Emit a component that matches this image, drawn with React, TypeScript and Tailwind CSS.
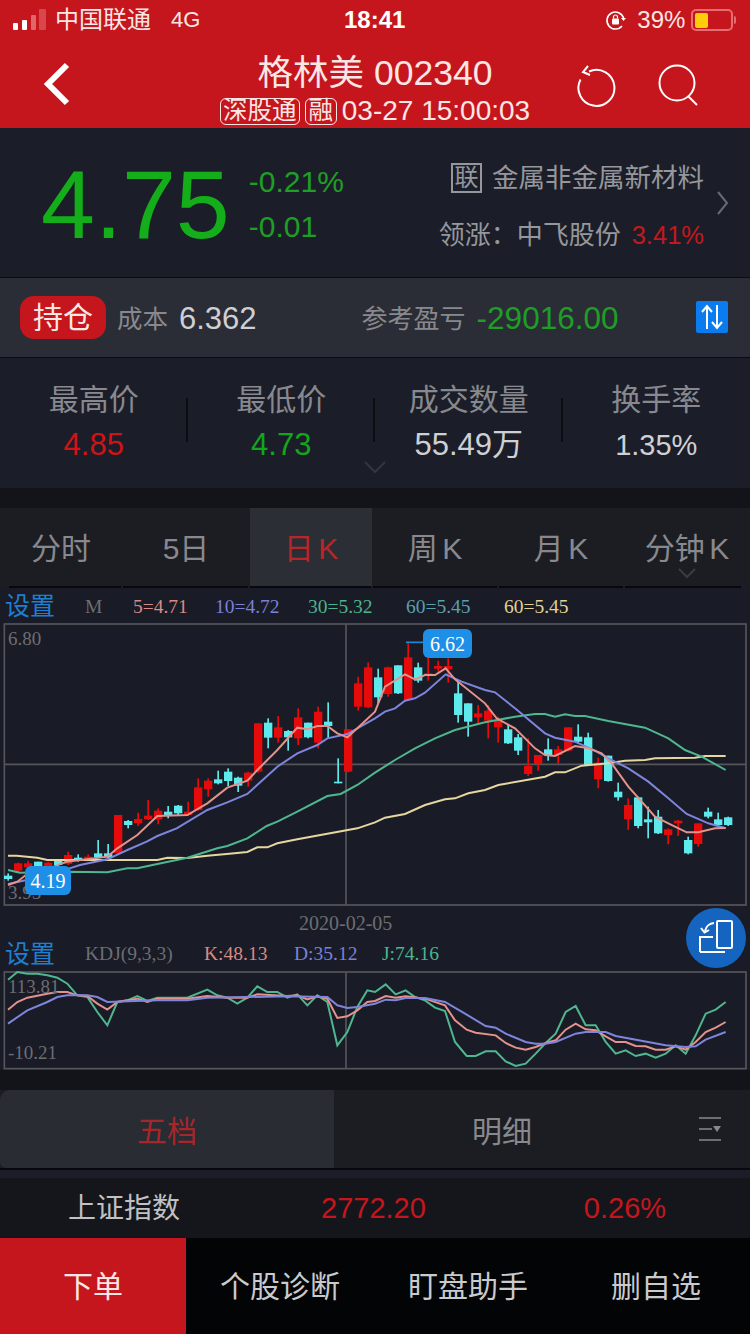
const SANS = "font-['Liberation_Sans','Noto_Sans_CJK_SC',sans-serif]";

// candles: [wick top, body top, body bottom, wick bottom, up?] in 3x picture units
const candles: [number, number, number, number, boolean][] = [
  [850, 857, 867, 872, false], [818, 820, 842, 845, true], [812, 820, 832, 838, true], [815, 815, 828, 830, false],
  [816, 818, 828, 830, true], [810, 812, 825, 827, false], [785, 795, 822, 825, true], [793, 803, 812, 815, false],
  [793, 800, 808, 810, true], [750, 790, 802, 805, false], [762, 790, 802, 805, false], [675, 675, 790, 792, true],
  [690, 693, 705, 715, false], [668, 687, 700, 708, true], [630, 677, 688, 690, true], [655, 662, 688, 703, true],
  [648, 665, 678, 685, false], [645, 647, 670, 678, false], [635, 665, 675, 678, true], [565, 592, 660, 662, true],
  [565, 572, 598, 620, true], [542, 568, 580, 583, false], [535, 545, 573, 588, false], [560, 563, 587, 606, false],
  [545, 548, 572, 590, true], [400, 400, 545, 548, true], [385, 398, 443, 475, false], [378, 412, 443, 458, true],
  [420, 423, 442, 482, false], [355, 382, 445, 465, true], [398, 398, 442, 445, false], [350, 365, 458, 475, true],
  [337, 395, 408, 445, false], [505, 575, 580, 580, false], [418, 418, 545, 547, true], [260, 280, 350, 362, true],
  [217, 232, 352, 354, true], [236, 262, 322, 340, false], [230, 232, 312, 320, true], [226, 226, 310, 312, false],
  [155, 202, 330, 332, true], [218, 232, 272, 278, false], [200, 250, 255, 272, true], [212, 228, 236, 245, true],
  [205, 228, 238, 278, true], [272, 310, 375, 398, false], [340, 340, 395, 440, false], [345, 370, 382, 400, true],
  [345, 362, 392, 445, true], [380, 392, 412, 458, true], [405, 418, 460, 462, false], [432, 442, 482, 495, false],
  [445, 528, 552, 558, true], [495, 495, 522, 542, true], [445, 478, 495, 512, false], [468, 478, 495, 522, true],
  [412, 412, 482, 484, true], [403, 440, 455, 460, false], [428, 442, 525, 527, false], [503, 518, 568, 595, true],
  [497, 497, 573, 575, false], [578, 605, 622, 632, false], [625, 645, 688, 720, true], [620, 622, 708, 715, false],
  [650, 688, 697, 745, false], [660, 680, 730, 732, false], [715, 718, 735, 763, true], [690, 692, 700, 738, true],
  [740, 750, 790, 793, false], [700, 700, 762, 770, true], [653, 665, 680, 685, false], [668, 688, 705, 710, false],
  [680, 682, 705, 708, false],
];

const ma5 = "24,885 52,875 80,853 140,838 200,815 322,800 352,775 412,735 472,678 562,675 622,640 682,593 742,572 772,540 832,480 892,413 922,418 952,408 982,408 1012,430 1042,442 1072,415 1125,365 1155,290 1215,253 1245,268 1275,255 1305,255 1337,235 1365,268 1455,340 1490,385 1545,415 1605,475 1635,495 1665,498 1725,468 1765,475 1805,490 1835,520 1885,590 1925,635 1965,680 2005,700 2060,727 2095,727 2145,715 2177,714";
const ma10 = "24,882 80,870 140,845 200,838 240,825 322,808 382,780 440,755 472,738 530,715 622,660 680,638 742,612 832,530 892,490 952,465 982,445 1042,432 1125,385 1155,365 1185,355 1215,332 1245,325 1275,308 1337,253 1385,275 1455,300 1485,307 1545,355 1635,430 1665,443 1725,455 1785,482 1825,505 1885,535 1945,575 2005,625 2060,672 2125,700 2177,715";
const ma30 = "24,840 60,848 200,845 322,847 382,835 412,835 472,822 562,803 652,775 682,768 742,745 800,708 832,695 892,665 982,618 1022,612 1072,585 1125,548 1185,510 1245,475 1305,445 1365,420 1455,397 1545,380 1605,372 1635,372 1665,380 1695,373 1725,378 1755,378 1825,393 1935,413 2005,445 2055,480 2105,500 2177,540";
const ma60 = "24,797 50,797 112,803 142,810 472,810 502,803 562,804 622,797 680,792 742,786 772,772 802,772 832,760 892,748 1072,715 1125,697 1155,683 1215,672 1275,645 1335,628 1365,625 1405,610 1455,600 1495,585 1635,560 1665,547 1695,547 1745,527 1825,520 1875,512 1935,510 1965,505 2085,503 2115,498 2177,498";

const kdjJ = "24,218 52,195 82,200 112,200 142,205 172,212 202,230 232,265 262,270 292,315 322,355 352,285 382,280 412,267 442,282 472,272 562,272 622,248 652,265 682,272 712,290 742,272 772,238 802,255 832,255 862,272 892,262 922,295 952,265 982,285 1012,415 1042,375 1072,300 1102,250 1125,255 1157,232 1187,262 1217,250 1245,270 1275,280 1305,302 1335,312 1365,405 1400,447 1427,447 1457,433 1487,433 1517,463 1547,477 1577,470 1607,440 1637,408 1667,380 1697,315 1727,297 1757,355 1787,355 1817,405 1847,440 1877,430 1907,447 1937,440 1967,452 1997,440 2027,415 2057,440 2087,385 2117,320 2147,308 2177,285";
const kdjK = "24,308 52,285 82,272 142,260 172,255 202,255 232,265 262,267 292,290 322,308 352,285 412,275 442,285 472,275 562,275 622,267 682,272 742,272 772,262 862,267 892,265 922,277 952,268 982,275 1012,333 1042,328 1072,310 1102,285 1125,282 1157,267 1187,272 1217,268 1275,275 1335,295 1365,340 1400,368 1427,377 1487,385 1517,408 1547,422 1577,428 1607,420 1637,408 1667,400 1697,368 1727,350 1757,367 1787,370 1817,388 1847,405 1877,405 1907,417 1937,418 1967,428 1997,428 2027,418 2057,428 2087,405 2117,375 2147,362 2177,345";
const kdjD = "24,350 82,310 142,285 172,270 202,265 262,265 292,270 322,285 472,280 562,280 622,272 862,268 982,270 1012,295 1042,303 1072,300 1125,290 1157,278 1187,280 1217,273 1275,273 1335,285 1395,320 1457,357 1487,362 1517,380 1577,405 1607,410 1637,410 1667,405 1727,380 1757,375 1817,375 1847,387 1997,415 2057,420 2087,418 2117,398 2177,375";

const PriceChart = () => (
  <svg width="750" height="285" viewBox="0 96 2250 855" className="block">
    <rect x="13" y="102" width="2225" height="843" fill="none" stroke="#55565b" strokeWidth="5" />
    <line x1="1038" y1="102" x2="1038" y2="945" stroke="#55565b" strokeWidth="5" />
    <line x1="13" y1="523" x2="2238" y2="523" stroke="#55565b" strokeWidth="5" />
    {candles.map((c, i) => {
      const x = 24 + i * 30;
      const color = c[4] ? "#e60b0b" : "#5ee9ec";
      return (
        <g key={i} fill={color}>
          <rect x={x - 2} y={c[0]} width="5" height={c[3] - c[0]} />
          <rect x={x - 12} y={c[1]} width="25" height={Math.max(c[2] - c[1], 5)} />
        </g>
      );
    })}
    <polyline points={ma60} fill="none" stroke="#e6d7a0" strokeWidth="6" />
    <polyline points={ma30} fill="none" stroke="#4fb78f" strokeWidth="6" />
    <polyline points={ma10} fill="none" stroke="#7f85dc" strokeWidth="6" />
    <polyline points={ma5} fill="none" stroke="#e3928c" strokeWidth="6" />
    <line x1="1218" y1="157" x2="1270" y2="157" stroke="#1e88d8" strokeWidth="5" />
  </svg>
);

const KdjChart = () => (
  <svg width="750" height="102" viewBox="0 186 2250 306" className="block">
    <rect x="13" y="195" width="2225" height="290" fill="none" stroke="#55565b" strokeWidth="5" />
    <line x1="1038" y1="195" x2="1038" y2="485" stroke="#55565b" strokeWidth="5" />
    <polyline points={kdjJ} fill="none" stroke="#4fb78f" strokeWidth="6" />
    <polyline points={kdjK} fill="none" stroke="#e3928c" strokeWidth="6" />
    <polyline points={kdjD} fill="none" stroke="#7f85dc" strokeWidth="6" />
  </svg>
);

const Stat = ({ label, value, color, last }: { label: string; value: string; color: string; last?: boolean }) => (
  <div className="relative flex h-full w-[187.5px] flex-col items-center pt-[21px]">
    <span className="text-[30px] leading-[42px] text-[#88898e]">{label}</span>
    <span className={`mt-[3px] leading-[42px] ${color}`}>{value}</span>
    {!last && <div className="absolute right-0 top-[40px] h-[44px] w-[2px] bg-[#0c0d11]" />}
  </div>
);

const tabs = [
  { name: "分时", width: "w-[122px]" },
  { name: "5日", width: "w-[128px]" },
  { name: "日 K", width: "w-[122px]" },
  { name: "周 K", width: "w-[126px]" },
  { name: "月 K", width: "w-[126px]" },
  { name: "分钟 K", width: "w-[126px]" },
];

export default function App() {
  return (
    <div className={`relative h-[1334px] w-[750px] overflow-hidden bg-[#12141a] ${SANS}`}>
      {/* status bar */}
      <div className="relative flex h-[40px] items-center bg-[#c4161c] text-white">
        <svg width="36" height="24" viewBox="0 0 36 24" className="ml-[12px]">
          <rect x="1" y="15" width="5" height="7" rx="1" fill="#fff" />
          <rect x="10" y="12" width="5" height="10" rx="1" fill="#fff" />
          <rect x="19" y="7" width="5" height="15" rx="1" fill="#e06669" />
          <rect x="27" y="1" width="7" height="21" rx="1" fill="#d9474b" />
        </svg>
        <span className="ml-[7px] text-[24px] leading-none text-[#fbe6e6]">中国联通</span>
        <span className="ml-[20px] text-[22px] leading-none text-[#fbe6e6]">4G</span>
        <span className="absolute left-[344px] text-[24px] font-bold leading-none">18:41</span>
        <svg width="22" height="22" viewBox="0 0 22 22" className="ml-[405px]">
          <path d="M17 17a8.500 8.500 0 1 1 1.600-8" fill="none" stroke="#fff" strokeWidth="1.600" />
          <path d="M16 9h5l-2.500 3z" fill="#fff" />
          <rect x="7" y="9.500" width="7" height="6" rx="1" fill="#fff" />
          <path d="M8.500 9.500V8a2 2 0 0 1 4 0v1.500" fill="none" stroke="#fff" strokeWidth="1.200" />
        </svg>
        <span className="ml-[10px] text-[24px] leading-none text-[#fbe6e6]">39%</span>
        <div className="ml-[6px] flex h-[22px] w-[42px] items-center rounded-[5px] border-2 border-[#e56c70] pl-[2px]">
          <div className="h-[15px] w-[13px] rounded-[2px] bg-[#ffcc0a]" />
        </div>
        <div className="ml-px h-[8px] w-[2px] rounded-r bg-[#e56c70]" />
      </div>

      {/* title bar */}
      <div className="relative flex h-[88px] flex-col items-center bg-[#c4161c] text-[#fbe6e6]">
        <svg width="30" height="44" viewBox="0 0 30 44" className="absolute left-[42px] top-[22px]">
          <path d="M25 3 6 22l19 19" fill="none" stroke="#fff" strokeWidth="6" />
        </svg>
        <span className="mt-[12px] text-[35.500px] leading-[42px]">格林美 002340</span>
        <div className="mt-[2px] flex h-[30px] items-center">
          <span className="flex h-[27px] w-[80px] items-center justify-center rounded-[6px] border-[1.500px] border-[#fbe6e6] text-[24.500px] leading-none">深股通</span>
          <span className="ml-[5px] flex h-[27px] w-[32px] items-center justify-center rounded-[6px] border-[1.500px] border-[#fbe6e6] text-[24.500px] leading-none">融</span>
          <span className="ml-[5px] text-[28px] leading-none">03-27 15:00:03</span>
        </div>
        <svg width="44" height="44" viewBox="0 0 44 44" className="absolute left-[576px] top-[24px]">
          <path d="M13 7.500a18 18 0 1 1-8.500 8" fill="none" stroke="#fff" strokeWidth="2" />
          <path d="M12 2 7 8l7 3" fill="none" stroke="#fff" strokeWidth="2" />
        </svg>
        <svg width="44" height="44" viewBox="0 0 44 44" className="absolute left-[656px] top-[22px]">
          <circle cx="21" cy="21" r="17.500" fill="none" stroke="#fff" strokeWidth="2" />
          <path d="m32 34 9 9" fill="none" stroke="#fff" strokeWidth="2" />
        </svg>
      </div>

      {/* quote */}
      <div className="relative flex h-[150px] items-start border-b border-[#0b0c10] bg-[#1b1e29]">
        <span className="ml-[41px] mt-[22px] text-[97px] leading-[110px] text-[#13ae1a]">4.75</span>
        <div className="ml-[19px] mt-[36px] flex flex-col gap-[10px] text-[30px] leading-[35px] text-[#1f9e26]">
          <span>-0.21%</span>
          <span>-0.01</span>
        </div>
        <div className="absolute right-[46px] top-[35px] flex flex-col items-end gap-[27px] text-[#96979c]">
          <div className="flex items-center">
            <span className="flex h-[30px] w-[31px] items-center justify-center border-2 border-[#96979c] text-[24px] leading-none">联</span>
            <span className="ml-[10px] text-[26.500px] leading-[30px]">金属非金属新材料</span>
          </div>
          <div className="flex items-center text-[26px] leading-[30px]">
            <span>领涨：中飞股份</span>
            <span className="ml-[11px] text-[25.500px] text-[#c01a1e]">3.41%</span>
          </div>
        </div>
        <svg width="14" height="26" viewBox="0 0 14 26" className="absolute left-[716px] top-[62px]">
          <path d="m2 2 9 11-9 11" fill="none" stroke="#676973" strokeWidth="2" />
        </svg>
      </div>

      {/* position */}
      <div className="relative flex h-[80px] items-center border-b border-[#0b0c10] bg-[#2b2d36]">
        <span className="ml-[20px] flex h-[43px] w-[86px] items-center justify-center rounded-[14px] bg-[#c4161c] text-[30px] leading-none text-[#fbe6e6]">持仓</span>
        <span className="ml-[11px] mt-[3px] text-[25.500px] text-[#88898e]">成本</span>
        <span className="ml-[11px] mt-[3px] text-[31px] text-[#cfd0d4]">6.362</span>
        <span className="ml-[105px] mt-[3px] text-[26px] text-[#88898e]">参考盈亏</span>
        <span className="ml-[11px] mt-[3px] text-[31.500px] text-[#1f9e26]">-29016.00</span>
        <div className="absolute left-[696px] top-[23px] flex h-[32px] w-[32px] items-center justify-center rounded-[2px] bg-[#0a7cf0]">
          <svg width="24" height="26" viewBox="0 0 24 26" fill="none" stroke="#fff" strokeWidth="2">
            <path d="M7 25V2M2 8l5-6 5 6" />
            <path d="M17 1v23M12 18l5 6 5-6" />
          </svg>
        </div>
      </div>

      {/* day stats */}
      <div className="relative flex h-[130px] bg-[#1b1e29] text-[31px]">
        <Stat label="最高价" value="4.85" color="text-[#d01317]" />
        <Stat label="最低价" value="4.73" color="text-[#13a51b]" />
        <Stat label="成交数量" value="55.49万" color="text-[#cfd0d4]" />
        <Stat label="换手率" value="1.35%" color="text-[#cfd0d4] text-[29px]" last />
        <svg width="22" height="14" viewBox="0 0 22 14" className="absolute left-[364px] top-[103px]">
          <path d="m1 1 10 10L21 1" fill="none" stroke="#33363f" strokeWidth="2" />
        </svg>
      </div>

      <div className="h-[20px] bg-[#12141a]" />

      {/* period tabs */}
      <div className="relative flex h-[78px] items-stretch bg-[#1c1d22] text-[30px] text-[#88898e] [word-spacing:-4px]">
        {tabs.map((t, i) => (
          <div
            key={t.name}
            className={`flex ${t.width} items-center justify-center pt-[2px] ${i === 2 ? "bg-[#2c2e36] text-[#b8252a]" : ""}`}
          >
            {t.name}
          </div>
        ))}
        <svg width="18" height="12" viewBox="0 0 18 12" className="absolute left-[678px] top-[60px]">
          <path d="m1 1 8 8 8-8" fill="none" stroke="#3a3c44" strokeWidth="2" />
        </svg>
      </div>
      <div className="flex h-[2px] gap-[2px] bg-[#191b26] pl-[9px]">
        <div className="w-[112px] bg-[#08090c]" />
        <div className="w-[125px] bg-[#08090c]" />
        <div className="w-[121px] bg-[#08090c]" />
        <div className="w-[124px] bg-[#08090c]" />
        <div className="w-[124px] bg-[#08090c]" />
        <div className="w-[116px] bg-[#08090c]" />
      </div>

      {/* charts */}
      <div className="relative h-[482px] bg-[#191b26] font-['Liberation_Serif','Noto_Sans_CJK_SC',serif]">
        <div className="flex h-[34px] items-center pt-[3px] text-[19.500px] leading-none">
          <span className={`ml-[5px] w-[50px] text-[25px] text-[#1f7fd0] ${SANS}`}>设置</span>
          <span className="ml-[30px] w-[48px] text-[#6d6e72]">M</span>
          <span className="w-[82px] text-[#d98a85]">5=4.71</span>
          <span className="w-[93px] text-[#7b80d8]">10=4.72</span>
          <span className="w-[98px] text-[#4db38d]">30=5.32</span>
          <span className="w-[98px] text-[#5a9fb0]">60=5.45</span>
          <span className="text-[#e3d195]">60=5.45</span>
        </div>
        <div className="relative">
          <PriceChart />
          <span className="absolute left-[8px] top-[6px] text-[19px] leading-[22px] text-[#6d6e72]">6.80</span>
          <span className="absolute left-[8px] top-[260px] text-[19px] leading-[22px] text-[#6d6e72]">3.95</span>
          <span className="absolute left-[25px] top-[244px] flex h-[29px] w-[46px] items-center justify-center rounded-[6px] bg-[#1e8fe6] text-[20px] leading-none text-white">4.19</span>
          <span className="absolute left-[423px] top-[7px] flex h-[29px] w-[49px] items-center justify-center rounded-[6px] bg-[#1e8fe6] text-[20px] leading-none text-white">6.62</span>
        </div>
        <div className="flex h-[32px] items-center pl-[299px] text-[20px] leading-none text-[#6d6e72]">2020-02-05</div>
        <div className="flex h-[30px] items-center text-[19.500px] leading-none">
          <span className={`ml-[5px] w-[50px] text-[25px] text-[#1f7fd0] ${SANS}`}>设置</span>
          <span className="ml-[30px] w-[119px] text-[#6d6e72]">KDJ(9,3,3)</span>
          <span className="w-[90px] text-[#d98a85]">K:48.13</span>
          <span className="w-[88px] text-[#7b80d8]">D:35.12</span>
          <span className="text-[#4db38d]">J:74.16</span>
        </div>
        <div className="relative">
          <KdjChart />
          <span className="absolute left-[8px] top-[7px] text-[19px] leading-[22px] text-[#6d6e72]">113.81</span>
          <span className="absolute left-[8px] top-[73px] text-[19px] leading-[22px] text-[#6d6e72]">-10.21</span>
        </div>
      </div>

      {/* rotate button */}
      <div className="absolute left-[686px] top-[908px] flex h-[60px] w-[60px] items-center justify-center rounded-full bg-[#1565c0]">
        <svg width="36" height="36" viewBox="0 0 36 36" fill="none" stroke="#fff" strokeWidth="2">
          <rect x="19" y="1" width="15" height="27" rx="1" />
          <path d="M2 32V17h13M2 32h25" />
          <path d="M16 3a10 10 0 0 0-9 8" />
          <path d="m3 8 3.500 4.500 4.500-2.500" />
        </svg>
      </div>

      <div className="h-[20px] bg-[#12141a]" />

      {/* order book tabs */}
      <div className="flex h-[80px] border-b-2 border-[#08090c] bg-[#1c1d22] text-[30px]">
        <div className="flex w-[334px] items-center justify-center rounded-tl-[10px] rounded-bl-[6px] bg-[#2a2c33] pt-[4px] text-[#a5272a]">五档</div>
        <div className="flex w-[336px] items-center justify-center pt-[4px] text-[#88898e]">明细</div>
        <div className="flex flex-1 items-center justify-center">
          <svg width="24" height="26" viewBox="0 0 24 26" fill="none" stroke="#88898e" strokeWidth="1.500">
            <path d="M1 2h22M1 13h13M1 24h22" />
            <path d="M15 10h8l-4 6z" fill="#88898e" stroke="none" />
          </svg>
        </div>
      </div>
      <div className="h-[8px] bg-[#1b1e29]" />

      {/* index ticker */}
      <div className="flex h-[60px] items-center bg-[#14161c] pt-[2px] text-[28px]">
        <span className="ml-[68px] text-[#c0c1c5]">上证指数</span>
        <span className="ml-[141px] text-[29px] text-[#c4161c]">2772.20</span>
        <span className="ml-[158px] text-[29px] text-[#c4161c]">0.26%</span>
      </div>

      {/* bottom actions */}
      <div className="flex h-[96px] bg-[#030406] text-[30px] text-[#c9cace]">
        <div className="flex w-[186px] items-center justify-center bg-[#c4161c] text-[#fbe6e6]">下单</div>
        <div className="flex w-[188px] items-center justify-center">个股诊断</div>
        <div className="flex w-[188px] items-center justify-center">盯盘助手</div>
        <div className="flex w-[188px] items-center justify-center">删自选</div>
      </div>
    </div>
  );
}
